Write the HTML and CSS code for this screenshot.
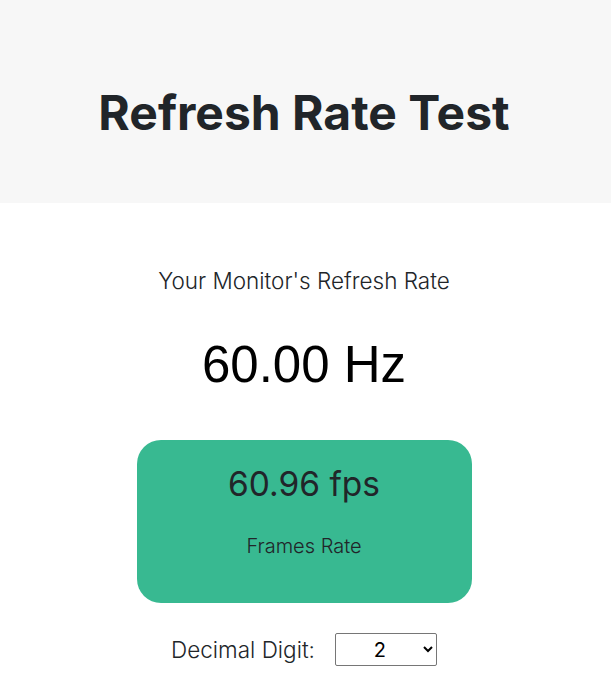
FILE: index.html
```html
<!DOCTYPE html>
<html lang="en">
<head>
    <meta charset="UTF-8">
    <meta name="viewport" content="width=device-width, initial-scale=1.0">
    <title>Refresh Rate Test</title>
    <link rel="stylesheet" href="styles.css">
</head>
<body>
    <header class="top">
        <h1>Refresh Rate Test</h1>
    </header>

    <main class="tester">
        <p class="label">Your Monitor's Refresh Rate</p>
        <div class="hz" id="hz">60.00 Hz</div>

        <div class="fps-box">
            <div class="fps" id="fps">60.96 fps</div>
            <div class="fps-label">Frames Rate</div>
        </div>

        <div class="digits">
            <label for="digit">Decimal Digit:</label>
            <select id="digit">
                <option>0</option>
                <option>1</option>
                <option selected>2</option>
                <option>3</option>
            </select>
        </div>
    </main>
</body>
</html>
```

FILE: styles.css
```css
body {
    margin: 0;
    font-family: Inter, "Noto Sans", sans-serif;
    color: #212529;
    background: #fff;
    text-align: center;
}
.top {
    background-color: #f7f7f7;
    height: 203px;
    display: flex;
    align-items: center;
    justify-content: center;
    padding-right: 3px;
}
.top h1 {
    margin: 0;
    font-size: 48px;
    font-weight: 700;
    padding-top: 22px;
}
.tester {
    padding-top: 64px;
    padding-right: 3px;
    display: flex;
    flex-direction: column;
    align-items: center;
}
.label {
    margin: 0;
    font-size: 22.5px;
    font-weight: 300;
}
.hz {
    font-family: "Liberation Sans", Arial, sans-serif;
    font-size: 51px;
    color: #000;
    margin-top: 41px;
}
.fps-box {
    width: 335px;
    height: 163px;
    margin-top: 46px;
    background-color: #38b991;
    border-radius: 24px;
    box-sizing: border-box;
    padding-top: 24px;
}
.fps {
    font-size: 33.5px;
    font-weight: 400;
}
.fps-label {
    font-size: 20px;
    font-weight: 300;
    margin-top: 30px;
}
.digits {
    margin-top: 30px;
    display: flex;
    align-items: center;
    gap: 20px;
    font-size: 22.5px;
    font-weight: 300;
}
.digits select {
    width: 102px;
    height: 33px;
    font-family: Inter, sans-serif;
    font-size: 20px;
    text-align: center;
    text-align-last: center;
    border: 1px solid #767676;
    border-radius: 2px;
    background: #fff;
    color: #000;
}
```
